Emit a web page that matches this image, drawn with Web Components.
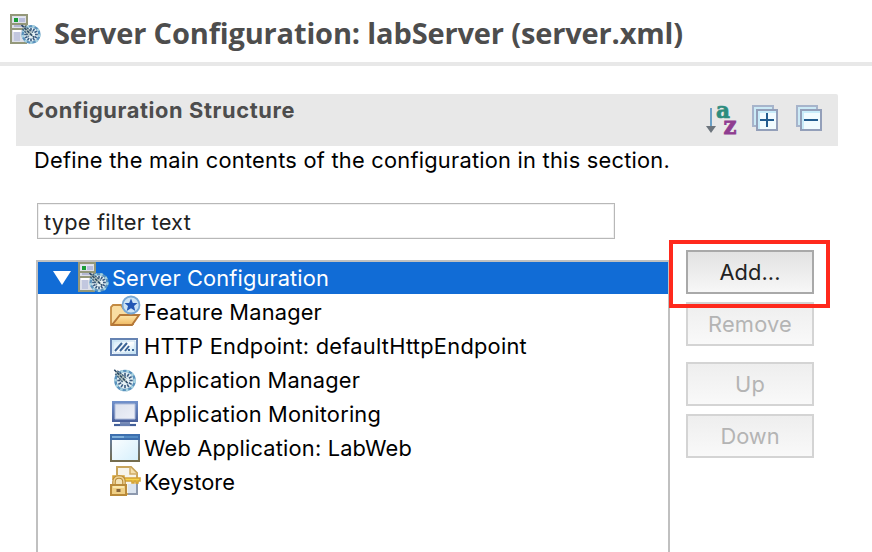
<!DOCTYPE html>
<html lang="en">
<head>
<meta charset="utf-8">
<title>Server Configuration</title>
<style>
html,body{margin:0;height:100%;overflow:hidden;background:#fff}
body{font:21.8px/34px Inter,"Liberation Sans",sans-serif;color:#000}
</style>
</head>
<body>
<config-editor></config-editor>
<script>
const dial = (cx, cy, r) => {
  let spokes = '';
  for (let i = 0; i < 12; i++) {
    spokes += `<path d="M0 ${-r * 0.72}V${-r * 0.42}" transform="rotate(${i * 30})"/>`;
  }
  return `<g transform="translate(${cx} ${cy})"><circle r="${r - 0.5}" fill="#e6f2f6"/>
  <circle r="${r - 1.1}" fill="none" stroke="#5a92bd" stroke-width="2.4"/>
  <circle r="${r - 1.1}" fill="none" stroke="#a9d3e0" stroke-width="2.4" stroke-dasharray="2.5 3.3"/>
  <g stroke="#3a5b80" stroke-width="1.6">${spokes}</g>
  <path d="M${-r} ${-r}L${-r * 0.1} ${-r * 0.5} 2.5 2.5 ${-r * 0.5} ${-r * 0.1}Z" fill="#b3c2bd"/>
  <path d="M${-r} ${-r}L3 3" stroke="#2a4865" stroke-width="1.5" stroke-dasharray="3 1"/>
  <path d="M${-r + 3} ${-r + 1}L2 -2M${-r + 1} ${-r + 4}L-2 2" stroke="#40607c" stroke-width="1.4" stroke-dasharray="2 1"/></g>`;
};

const ICONS = {
  server: `<path d="M1 1H17V11H15V15H17V29H1Z" fill="#dddfe8"/>
    <path d="M1 1H17V10H1ZM1 15V29H17M1 15H17M1 10V15M16 10V15" fill="none" stroke="#94987a" stroke-width="2"/>
    <path d="M3 3H15V8H3Z" fill="#e3e6f3"/><path d="M9 4H15V8H9Z" fill="#b8bddb"/>
    <path d="M4 4H8V8H4Z" fill="#189c36"/><path d="M4 12H14" stroke="#b4b8d2" stroke-width="2"/>
    <path d="M4 18H10V27H4Z" fill="#c2c7df"/><path d="M3 17H11" stroke="#fff" stroke-width="2"/>
    ${dial(21, 20.5, 9.5)}`,
  folder: `<defs><linearGradient id="f" x2="0" y2="1"><stop stop-color="#ffe7ab"/><stop offset="1" stop-color="#efb962"/></linearGradient></defs>
    <path d="M1 28V11L3 9H11L13 12H23V28Z" fill="#f9dda2" stroke="#c38a42" stroke-width="1.8"/>
    <path d="M2 29L10 19H29L22 29Z" fill="url(#f)" stroke="#b57838" stroke-width="2"/>
    <circle cx="21" cy="9" r="8.5" fill="#cde4f5" stroke="#78a8d5" stroke-width="1.8"/>
    <path d="M21 2.5L22.8 7H27.5L24 10L25.3 15L21 12.3L16.7 15L18 10L14.5 7H19.2Z" fill="#2358b5"/>`,
  http: `<defs><linearGradient id="h" x2="1" y2="1"><stop stop-color="#bfe4f6"/><stop offset=".5" stop-color="#fff"/><stop offset="1" stop-color="#b9dff4"/></linearGradient></defs>
    <path d="M1 9H27V25H1Z" fill="url(#h)" stroke="#6583b2" stroke-width="2"/>
    <path d="M3 11H25V23H3Z" fill="none" stroke="#c5def0"/>
    <path d="M5 21L12 13M10 21L17 13M15 21L19 16" stroke="#3c6596" stroke-width="2"/>
    <path d="M18 20H20M22 20H24" stroke="#3c6596" stroke-width="2"/>`,
  dial: `${dial(15, 16.5, 10.7)}`,
  monitor: `<defs><linearGradient id="m" x2="0" y2="1"><stop stop-color="#7292cc"/><stop offset="1" stop-color="#485f9a"/></linearGradient><linearGradient id="n" x2="1" y2="1"><stop stop-color="#dce1ed"/><stop offset="1" stop-color="#edf0f8"/></linearGradient></defs>
    <path d="M2 3H28V24H2Z" fill="url(#m)"/><path d="M5 6H25V21H5Z" fill="url(#n)" stroke="#b0bddb"/>
    <path d="M10 24H20V26H10Z" fill="#7b8eb9"/><path d="M4 27H26" stroke="#425f99" stroke-width="2.2"/><path d="M10 27H20" stroke="#8fa4cc" stroke-width="1"/>`,
  web: `<defs><linearGradient id="w" x2="0" y2="1"><stop stop-color="#6582ad"/><stop offset="1" stop-color="#756c4d"/></linearGradient><linearGradient id="v" x2="1" y2="1"><stop stop-color="#fff"/><stop offset="1" stop-color="#d4effc"/></linearGradient></defs>
    <path d="M1 3H29V29H1Z" fill="url(#v)" stroke="url(#w)" stroke-width="2"/>
    <path d="M0 2H30V8H0Z" fill="#3d6fae"/><path d="M2 5H14" stroke="#7fb1dc" stroke-width="2"/><path d="M14 5H28" stroke="#528bc4" stroke-width="2"/>`,
  key: `<path d="M7 9V1H21L27 7V28H17" fill="#f7f4ea" stroke="#c9a55c" stroke-width="2"/>
    <path d="M20 1V8H27" fill="#f5dfac" stroke="#d0ac66" stroke-width="1.5"/>
    <path d="M18 18H26V27H18Z" fill="#dbe4ef"/><path d="M27 18V28H18" fill="none" stroke="#8d99ae" stroke-width="2"/>
    <path d="M3 14V10H14V12H30V15H28V17H26V15H24V17H22V15H14V17" fill="#f6d349" stroke="#d3a136" stroke-width="1.5"/>
    <path d="M4 21V16Q4 11 9 11T14 16V21" fill="#f3e3b8" stroke="#b98a39" stroke-width="3.6"/>
    <path d="M4 21V16Q4 11 9 11T14 16V21" fill="none" stroke="#f0d595" stroke-width="1.4"/>
    <path d="M1 19H16V29H1Z" fill="#efcf85" stroke="#b98a39" stroke-width="2"/>
    <path d="M3 21H14" stroke="#fff0bd" stroke-width="1.5"/><path d="M6.5 23H10.5V26H6.5Z" fill="#87653a"/>`,
  sort: `<path d="M6 5V24" stroke="#6ba0c6" stroke-width="2"/><path d="M1 23H11L6 30Z" fill="#6c747c"/>
    <text x="11" y="15" textLength="14" lengthAdjust="spacingAndGlyphs" font-family="DejaVu Serif" font-weight="700" font-size="23" fill="#2d8c7e" stroke="#2d8c7e" stroke-width=".7">a</text>
    <text x="18.5" y="31" textLength="13" lengthAdjust="spacingAndGlyphs" font-family="DejaVu Serif" font-weight="700" font-size="24" fill="#8f3d90" stroke="#8f3d90" stroke-width=".9">z</text>`,
  expand: `<path d="M1 3H21V23H1Z" fill="#cbeaf6" stroke="#a7b4cb" stroke-width="2"/><path d="M5 7H25V27H5Z" fill="#f1fbff" stroke="#939fb9" stroke-width="2"/><path d="M7 26V9H24" fill="none" stroke="#c9ecfa" stroke-width="2"/><path d="M8 17H22M15 10V24" stroke="#225b8e" stroke-width="2"/>`,
  collapse: `<path d="M1 3H21V23H1Z" fill="#cbeaf6" stroke="#a7b4cb" stroke-width="2"/><path d="M5 7H25V27H5Z" fill="#f1fbff" stroke="#939fb9" stroke-width="2"/><path d="M7 26V9H24" fill="none" stroke="#c9ecfa" stroke-width="2"/><path d="M8 17H22" stroke="#225b8e" stroke-width="2"/>`
};

const define = (name, css, html, setup) => {
  const template = document.createElement('template');
  template.innerHTML = `<style>${css}</style>${html}`;
  customElements.define(name, class extends HTMLElement {
    constructor() {
      super();
      this.attachShadow({mode: 'open'}).append(template.content.cloneNode(true));
    }
    connectedCallback() { if (setup) setup(this, this.shadowRoot); }
  });
};

define('ui-icon', ':host{display:block;flex:none;width:32px;height:32px}svg{display:block;overflow:visible}', '<div></div>', (el, root) => {
  root.querySelector('div').innerHTML =
    `<svg width="32" height="32" viewBox="0 0 32 32">${ICONS[el.getAttribute('name')]}</svg>`;
});

/* A single line of text, tracked so that it spans the width attribute. */
define('text-run', ':host{display:block;flex:none;white-space:pre}span{display:inline-block}', '<span></span>', (el, root) => {
  const span = root.querySelector('span');
  const text = el.getAttribute('text');
  span.textContent = text;
  const goal = Number(el.getAttribute('width'));
  const natural = span.getBoundingClientRect().width;
  span.style.letterSpacing = (goal - natural) / text.length + 'px';
  el.style.width = goal + 'px';
});

define('editor-title', `:host{display:flex;box-sizing:border-box;height:66px;padding:14px 0 0 10px;border-bottom:4px solid #e8e8e8;
  font:700 29px/38px "Open Sans","Noto Sans",sans-serif;color:#4d4d4d}
  text-run{margin-left:12px}`,
  '<ui-icon name="server"></ui-icon><text-run width="629" text="Server Configuration: labServer (server.xml)"></text-run>');

define('section-header', `:host{display:flex;box-sizing:border-box;width:822px;height:52px;margin:28px 0 0 16px;padding:0 10px 0 12px;
  background:#e8e8e8;border-radius:2px 2px 0 0;font-weight:700;line-height:32px;color:#4d4d4d}
  .tools{display:flex;margin:9px 0 0 auto}
  ui-icon+ui-icon{margin-left:15px}ui-icon+ui-icon+ui-icon{margin-left:12px}`,
  `<text-run width="267" text="Configuration Structure"></text-run>
  <div class="tools"><ui-icon name="sort"></ui-icon><ui-icon name="expand"></ui-icon><ui-icon name="collapse"></ui-icon></div>`);

define('filter-field', `:host{display:block;box-sizing:border-box;width:578px;height:36px;margin:26px 0 0 37px;padding:1px 0 0 6px;
  border:1px solid #b8b8b8;box-shadow:inset 0 0 0 1px #f1f1f1;color:#222}`,
  '<text-run width="147" text="type filter text"></text-run>');

define('tree-row', `:host{display:flex;height:34px;padding-left:72px;line-height:32px}
  :host([selected]){box-sizing:border-box;height:32px;margin-bottom:2px;padding-left:15px;background:#116cd6;color:#fff}
  .arrow{display:none;flex:none;width:18px;height:14px;margin:9px 7px 0 0}
  :host([selected]) .arrow{display:block}
  ui-icon{margin-right:2px}`,
  '<svg class="arrow" viewBox="0 0 18 14"><path d="M0 0H18L9 14Z" fill="#fff"/></svg>', (el, root) => {
    const icon = document.createElement('ui-icon');
    icon.setAttribute('name', el.getAttribute('icon'));
    const run = document.createElement('text-run');
    run.setAttribute('text', el.getAttribute('label'));
    run.setAttribute('width', el.getAttribute('width'));
    root.append(icon, run);
  });

define('config-tree', `:host{display:block;box-sizing:border-box;width:634px;height:320px;border:2px solid #c0c0c0}`, '<slot></slot>');

define('push-button', `:host{display:flex;justify-content:center;box-sizing:border-box;width:128px;height:44px;padding-top:3px;
  border:2px solid #d4d4d4;background:linear-gradient(#eee,#f9f9f9);color:#b4b4b4}
  :host([active]){border-color:#a9a9a9;background:linear-gradient(#e2e2e2,#f7f7f7);color:#222}`,
  '<slot></slot>');

define('button-column', `:host{display:flex;flex-direction:column;gap:8px;position:relative;margin:-10px 0 0 16px}
  .gap{margin-top:8px}
  .callout{position:absolute;box-sizing:border-box;left:-17px;top:-10px;width:161px;height:68px;border:4px solid #ff291c}`,
  `<push-button active><text-run width="61" text="Add..."></text-run></push-button>
  <push-button><text-run width="84" text="Remove"></text-run></push-button>
  <push-button class="gap"><text-run width="30" text="Up"></text-run></push-button>
  <push-button><text-run width="59" text="Down"></text-run></push-button>
  <div class="callout"></div>`);

define('config-editor', `:host{display:block;width:872px;height:552px;overflow:hidden;background:#fff}
  .intro{margin:-3px 0 0 34px}
  .main{display:flex;align-items:flex-start;margin:21px 0 0 36px}`,
  `<editor-title></editor-title>
  <section-header></section-header>
  <text-run class="intro" width="636" text="Define the main contents of the configuration in this section."></text-run>
  <filter-field></filter-field>
  <div class="main">
    <config-tree>
      <tree-row selected icon="server" label="Server Configuration" width="217"></tree-row>
      <tree-row icon="folder" label="Feature Manager" width="178"></tree-row>
      <tree-row icon="http" label="HTTP Endpoint: defaultHttpEndpoint" width="383"></tree-row>
      <tree-row icon="dial" label="Application Manager" width="216"></tree-row>
      <tree-row icon="monitor" label="Application Monitoring" width="237"></tree-row>
      <tree-row icon="web" label="Web Application: LabWeb" width="268"></tree-row>
      <tree-row icon="key" label="Keystore" width="91"></tree-row>
    </config-tree>
    <button-column></button-column>
  </div>`);
</script>
</body>
</html>
